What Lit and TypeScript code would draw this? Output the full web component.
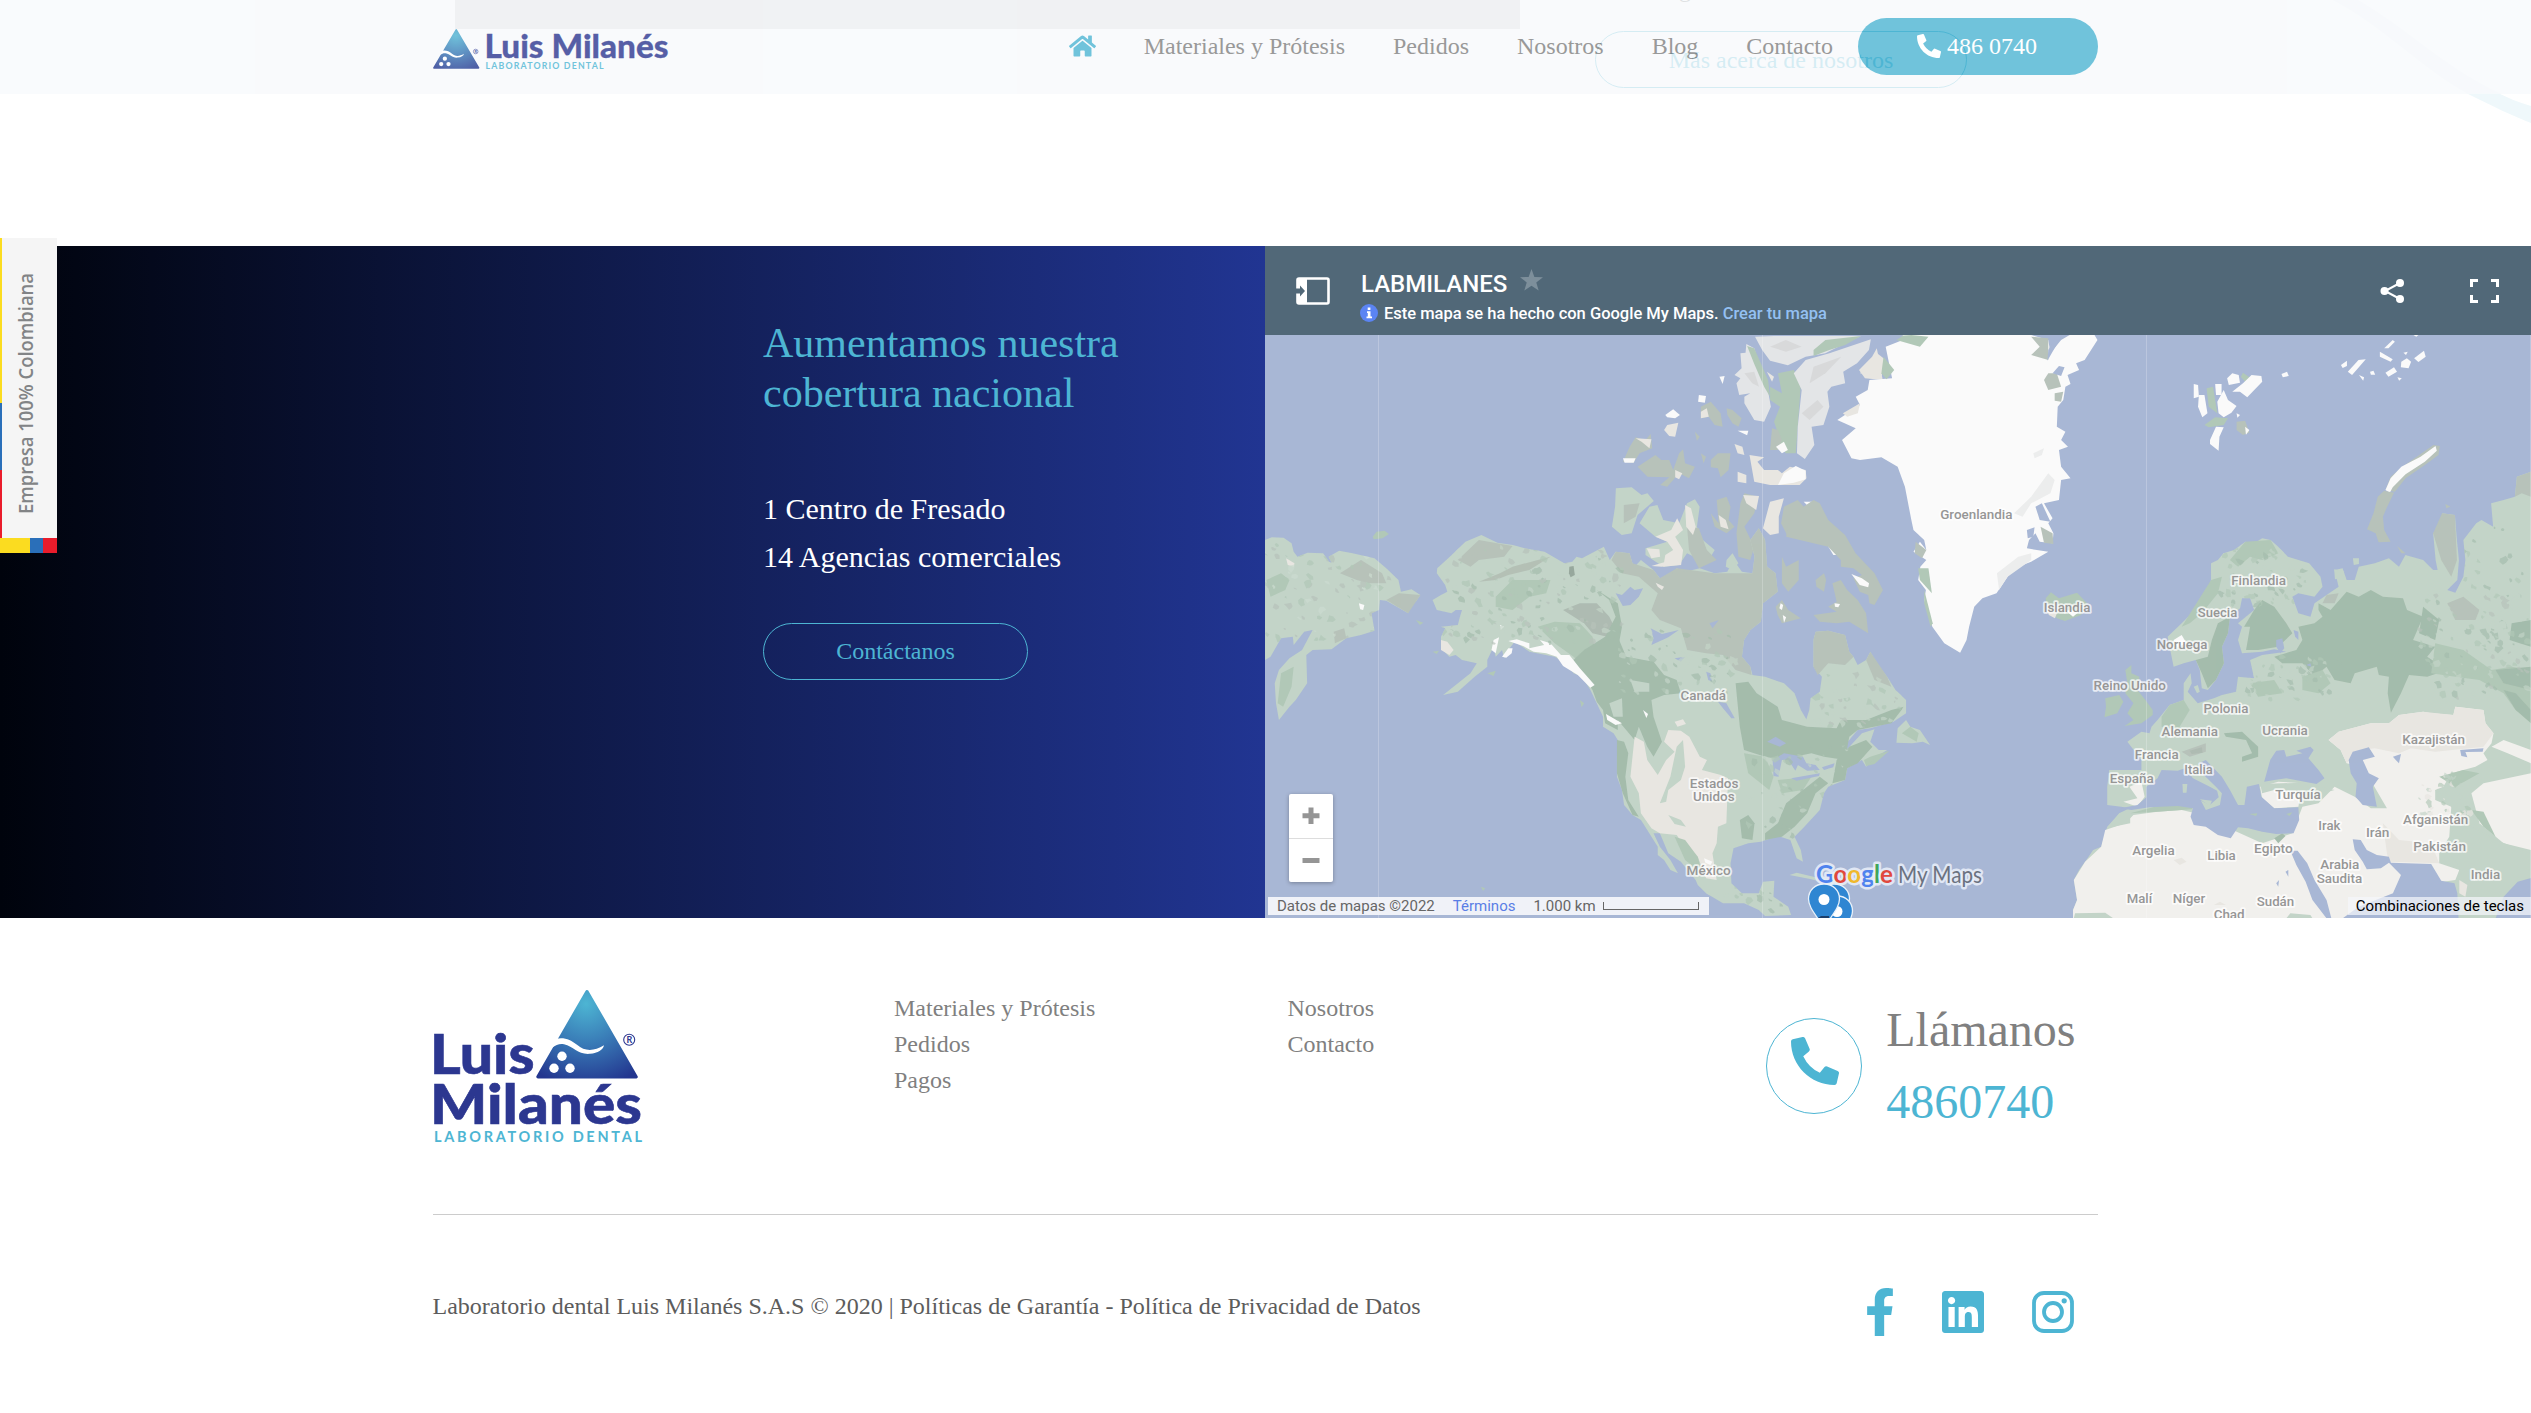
import { LitElement, html, svg, css } from "lit";
import { customElement } from "lit/decorators.js";

const PHONE =
  "M497.39 361.8l-112-48a24 24 0 0 0-28 6.9l-49.6 60.6A370.66 370.66 0 0 1 130.6 204.11l60.6-49.6a23.94 23.94 0 0 0 6.9-28l-48-112A24.16 24.16 0 0 0 122.6.61l-104 24A24 24 0 0 0 0 48c0 256.5 207.9 464 464 464a24 24 0 0 0 23.4-18.6l24-104a24.29 24.29 0 0 0-14.01-27.6z";
const HOME =
  "M280.37 148.26L96 300.11V464a16 16 0 0 0 16 16l112.06-.29a16 16 0 0 0 15.92-16V368a16 16 0 0 1 16-16h64a16 16 0 0 1 16 16v95.64a16 16 0 0 0 16 16.05L464 480a16 16 0 0 0 16-16V300L295.67 148.26a12.19 12.19 0 0 0-15.3 0zM571.6 251.47L488 182.56V44.05a12 12 0 0 0-12-12h-56a12 12 0 0 0-12 12v72.61L318.47 43a48 48 0 0 0-61 0L4.34 251.47a12 12 0 0 0-1.6 16.9l25.5 31A12 12 0 0 0 45.15 301l235.22-193.74a12.19 12.19 0 0 1 15.3 0L530.9 301a12 12 0 0 0 16.9-1.6l25.5-31a12 12 0 0 0-1.7-16.93z";
const FACEBOOK =
  "M279.14 288l14.22-92.66h-88.91v-60.13c0-25.35 12.42-50.06 52.24-50.06h40.42V6.26S260.43 0 225.36 0c-73.22 0-121.08 44.38-121.08 124.72v70.62H22.89V288h81.39v224h100.17V288z";
const LINKEDIN =
  "M416 32H31.9C14.3 32 0 46.5 0 64.3v383.4C0 465.5 14.3 480 31.9 480H416c17.6 0 32-14.5 32-32.3V64.3c0-17.8-14.4-32.3-32-32.3zM135.4 416H69V202.2h66.5V416zm-33.2-243c-21.3 0-38.5-17.3-38.5-38.5S80.9 96 102.2 96c21.2 0 38.5 17.3 38.5 38.5 0 21.3-17.2 38.5-38.5 38.5zm282.1 243h-66.4V312c0-24.8-.5-56.7-34.5-56.7-34.6 0-39.9 27-39.9 54.9V416h-66.4V202.2h63.7v29.2h.9c8.9-16.8 30.6-34.5 62.9-34.5 67.2 0 79.7 44.3 79.7 101.9V416z";

/* ---------- shared brand mark, 102 x 89 ---------- */
const mark = (id: string) => svg`
  <defs>
    <radialGradient id=${id} gradientUnits="userSpaceOnUse" cx="50" cy="14" r="84">
      <stop offset="0" stop-color="#4db5d3"></stop>
      <stop offset=".5" stop-color="#3878b5"></stop>
      <stop offset="1" stop-color="#23368f"></stop>
    </radialGradient>
  </defs>
  <path d="M51 2 L100 87 H2 Z" fill="url(#${id})" stroke="url(#${id})" stroke-width="3.5" stroke-linejoin="round"></path>
  <path d="M20 49 C28 47 35 50 41 55 C49 62 58 61.500 68 55.500 C67 60 62 63.500 54 64 C42 65 38 57 28 54.500 C24 53.500 20 55 16 58 Z" fill="#fff"></path>
  <circle cx="26" cy="66.500" r="4.700" fill="#fff"></circle>
  <circle cx="18" cy="78.500" r="4.700" fill="#fff"></circle>
  <circle cx="34" cy="78.500" r="4.700" fill="#fff"></circle>`;

/* ---------- map data ---------- */
type Shape = [string, string];
const SEA = "#a8b7d5", LAND = "#c3d4c8", WOOD = "#a4bcac", MID = "#b1c8b7", TUNDRA = "#b7c2ba",
  DRY = "#e8e6e1", SAND = "#f1f0ed", ICE = "#fafafa", PALE = "#e3e5e7", ROCK = "#aebbb2";

const SIBERIA = "12,-60 28,-68 56,-67 75,-50 80,-25 89,-10 113,-22 150,-20 164,5 170,8 163,-10 188,-28 220,-20 272,-5 300,25 329,60 335,95 360,88 381,105 370,125 352,130 352,160 325,140 300,122 285,120 283,150 265,160 272,212 240,225 205,235 170,268 125,270 110,285 112,370 85,420 70,440 45,480 38,430 35,370 45,330 70,295 100,270 125,210 105,215 80,255 78,230 50,235 25,290 12,300";
const AMERICA = "421,25 451,-10 488,-55 526,-75 564,-52 601,-45 629,-35 676,-25 723,10 742,5 752,-10 765,-5 817,-40 831,0 845,-25 878,-20 885,10 890,20 905,0 935,30 950,55 975,45 990,25 1010,35 1045,25 1080,40 1110,35 1125,0 1145,35 1170,40 1175,-10 1165,-60 1185,-95 1200,-60 1205,20 1225,40 1230,95 1195,130 1190,185 1165,210 1150,240 1145,290 1165,320 1170,345 1200,350 1245,370 1270,400 1285,450 1298,478 1305,450 1308,415 1330,395 1335,350 1315,320 1315,240 1320,215 1350,212 1390,225 1400,275 1410,290 1420,315 1440,300 1450,275 1465,310 1490,350 1510,390 1535,420 1535,460 1505,485 1450,505 1420,510 1400,540 1380,570 1395,568 1430,520 1460,508 1450,545 1470,570 1490,570 1465,590 1440,620 1430,600 1395,625 1390,660 1350,680 1340,700 1330,750 1290,805 1270,830 1285,870 1290,905 1275,895 1260,840 1230,828 1190,845 1160,850 1125,865 1118,910 1120,970 1145,1000 1185,1000 1195,965 1222,962 1220,1010 1255,1040 1262,1065 1200,1068 1185,1050 1150,1030 1100,1030 1060,1000 1040,975 1035,960 1000,905 970,880 950,820 935,820 950,860 975,900 993,940 975,930 960,900 945,885 945,860 920,810 905,780 885,765 865,735 860,690 848,650 848,590 850,540 840,520 815,500 815,470 800,430 785,390 765,350 745,340 725,310 700,290 640,275 605,245 590,270 580,295 575,270 560,290 555,260 540,300 540,320 510,350 470,395 435,405 500,340 515,310 480,300 465,285 450,290 430,265 430,230 440,205 430,200 470,195 475,170 480,150 465,150 455,160 420,150 410,120 430,105 445,95 440,75 420,40";
const EURASIA = "773,10 790,0 804,-20 830,-30 858,-55 880,-50 900,-65 921,-60 940,-40 964,-10 1017,10 1045,50 1050,80 1030,110 990,100 975,110 990,160 1020,170 1030,130 1060,105 1090,80 1080,30 1100,25 1110,60 1130,60 1140,20 1180,10 1215,-5 1240,20 1256,-15 1300,0 1325,30 1336,30 1331,0 1325,-80 1347,-105 1347,-140 1379,-135 1384,-60 1389,0 1385,60 1360,90 1380,98 1400,50 1405,0 1400,-60 1432,-110 1445,-120 1474,-100 1469,-170 1500,-180 1528,-190 1533,-250 1568,-265 1580,1075 430,1075 430,1050 440,1020 432,960 445,930 460,905 480,870 500,860 515,800 545,760 570,745 550,740 515,735 515,680 520,630 600,630 600,600 565,545 600,515 620,520 625,500 640,480 670,435 705,420 705,370 722,340 725,370 715,395 740,430 780,415 800,405 835,395 840,350 880,355 870,300 900,285 960,275 930,268 900,275 850,280 840,240 850,200 840,190 880,150 870,115 850,115 845,145 820,170 815,220 800,260 805,310 785,360 765,390 750,385 745,330 735,300 705,310 680,320 670,260 665,230 700,190 750,130 773,60";

const NORTH_AMERICA: Shape[] = [
  [AMERICA, LAND],
  ["470,0 520,-60 600,-42 580,-10 520,0 500,20", TUNDRA],
  ["520,65 570,40 600,20 660,0 690,-10 640,30 590,45 560,60", "#b4c0b6"],
  ["845,-25 878,-20 885,10 935,30 950,55 990,25 1080,40 1170,40 1175,-10 1165,-60 1185,-95 1200,-60 1205,20 1225,40 1230,95 1195,130 1190,185 1165,210 1150,240 1145,290 1165,320 1168,345 1130,330 1100,285 1060,280 1015,270 1000,205 950,180 930,150 945,100 900,50 860,40 835,0", TUNDRA],
  ["1315,240 1320,215 1350,212 1390,225 1400,275 1410,290 1390,315 1350,310 1325,345 1315,320", TUNDRA],
  ["1440,300 1450,275 1490,350 1500,380 1460,360", TUNDRA],
  ["720,150 760,130 800,130 830,170 845,210 840,235 790,220 770,190", ROCK],
  ["560,110 600,60 690,60 680,100 640,110 600,150 560,140", MID],
  ["660,200 700,185 760,190 790,230 800,300 770,320 745,290 700,250", MID],
  ["845,170 830,120 800,90 850,130 860,200 850,270 780,280 770,270 820,230", WOOD],
  ["770,270 850,230 870,290 935,305 960,345 990,360 1000,400 960,405 930,420 935,470 955,545 935,590 920,560 900,500 890,540 870,510 850,480 850,510 820,490 815,450 800,425 790,390 765,340 745,300", WOOD],
  ["880,360 925,370 925,395 890,395", LAND],
  ["1130,370 1160,365 1180,400 1230,440 1240,480 1300,500 1370,505 1380,480 1440,480 1500,450 1530,440 1500,490 1420,510 1400,530 1390,600 1340,590 1310,580 1270,590 1240,600 1200,590 1150,570 1140,500", WOOD],
  ["1400,560 1440,540 1455,560 1420,610 1395,625 1390,660 1360,670 1370,600", WOOD],
  ["1150,580 1200,590 1220,650 1210,690 1160,640", MID],
  ["1140,780 1160,765 1175,790 1170,840 1145,835", WOOD],
  ["1200,820 1230,790 1250,730 1300,680 1330,650 1350,670 1320,700 1300,760 1270,800 1240,830 1200,840", WOOD],
  ["1230,660 1310,650 1290,690 1240,700", MID],
  ["848,540 865,545 875,580 868,650 875,720 900,770 885,765 862,700 848,640", WOOD],
  ["830,430 860,415 862,470 840,470", LAND],
  ["890,530 912,545 920,600 945,645 965,600 985,575 960,545 970,510 1000,512 1020,530 1045,590 1062,600 1050,630 1095,645 1112,655 1108,790 1088,800 1085,850 1075,880 1085,960 1060,955 1040,890 1015,872 990,825 950,820 930,805 905,760 900,700 880,650 885,590", DRY],
  ["985,485 1005,478 1012,492 992,500", DRY],
  ["990,560 1005,540 1010,620 1000,660 970,690 965,725 950,730 975,650", LAND],
  ["970,765 1000,780 1012,800 985,792", LAND],
  ["985,830 1010,840 1040,890 1050,940 1010,900", MID],
  ["555,240 568,232 560,280 550,270", ICE], ["575,290 590,265 600,265 598,280 585,293", ICE],
  ["590,243 610,238 640,250 640,265 675,255 665,240 690,250 715,285 735,285 760,325 795,375 785,383 755,345 720,318 705,290 680,280 650,275 625,258", ICE],
  ["822,462 860,490 845,495 825,480", ICE], ["910,450 922,462 918,474", ICE], ["570,195 580,200 572,210", ICE],
  ["930,18 1000,-8 985,12 955,20", DRY], ["940,68 960,80 955,90 945,80", DRY],
  ["1055,895 1075,905 1070,915 1058,908", ICE],
  ["430,270 430,240 445,245 460,270 450,285", DRY],
  ["735,20 745,18 748,45 738,52 734,40", "#98a89d"],
  ["845,100 860,105 880,80 890,90 910,85 900,110 880,135 862,138", SEA],
  ["928,205 955,222 995,210 970,232 930,255 935,235", SEA],
  ["985,295 1010,290 1000,305", SEA], ["1060,335 1070,340 1075,365 1065,360", SEA],
  ["1088,425 1108,430 1128,475 1120,475 1100,445", SEA],
  ["1068,190 1090,180 1075,205", SEA],
  ["1205,545 1225,530 1250,550 1235,560", SEA],
  ["1218,600 1245,580 1290,590 1298,610 1320,615 1330,630 1300,632 1278,615 1272,632 1255,600 1240,600 1232,650 1220,648", SEA],
  ["1262,655 1330,640 1328,648 1275,662", SEA], ["1335,622 1365,610 1362,622 1340,630", SEA],
  ["1515,505 1535,480 1545,500 1568,510 1592,555 1575,545 1550,550 1512,548", LAND],
  ["1525,520 1545,500 1565,520 1560,545", MID],
  ["1258,945 1275,938 1320,952 1365,960 1395,975 1350,972 1310,958", LAND],
  ["1435,600 1450,590 1495,572 1460,612 1440,618", MID],
  ["1320,60 1340,40 1345,60 1340,95 1322,80", TUNDRA],
  ["1225,140 1240,120 1255,150 1285,175 1240,190 1230,165", TUNDRA],
  ["1380,0 1350,-40 1250,-70 1255,-110 1280,-150 1315,-180 1330,-170 1350,-120 1390,-75 1415,-20 1460,40 1480,90 1460,135 1448,130 1445,105 1425,95 1410,55 1430,45 1410,25 1380,20", TUNDRA],
  ["1360,70 1380,60 1395,90 1420,120 1440,160 1445,220 1400,185 1370,190 1330,185 1315,165 1370,155 1350,140 1370,125", TUNDRA],
  ["1240,-10 1250,20 1280,0 1280,60 1255,95 1240,70", TUNDRA],
  ["1405,42 1430,55 1447,70 1445,82 1425,75", ICE], ["1237,130 1243,135 1240,150 1234,145", ICE],
  ["1242,165 1250,172 1245,188", ICE], ["1365,130 1378,132 1374,142 1366,140", ICE],
  ["525,980 535,985 530,993", MID], ["370,180 388,188 380,195", MID], ["410,275 425,272 420,282", MID],
  ["540,340 560,332 555,348", MID], ["760,420 770,430 764,442", MID],
];

const RUSSIA_EAST: Shape[] = [
  [SIBERIA, LAND],
  ["190,40 240,0 290,40 300,70 260,70 230,60", TUNDRA], ["330,100 381,105 352,160 300,120", TUNDRA],
  ["15,60 50,40 70,60 60,90 25,110", MID], ["175,215 200,205 205,235 178,250", TUNDRA],
  ["50,340 80,320 75,380 55,440 42,430", MID], ["235,130 248,135 245,150 238,148", ICE],
  ["62,-5 82,10 80,20 66,15", DRY],
];

const ARCTIC: Shape[] = [
  ["285,890 295,875 315,872 326,882 310,895 288,898", MID],
  ["900,745 940,742 965,765 980,760 996,783 955,825 940,880 915,885 890,860 898,800", LAND],
  ["920,795 960,790 950,830 920,850", TUNDRA],
  ["960,850 985,800 1005,795 1020,840 1060,850 1080,790 1100,778 1112,800 1105,860 1120,900 1150,930 1130,970 1080,940 1060,975 1020,980 975,945 975,925 1030,905 1000,890", LAND],
  ["1080,860 1110,865 1130,930 1155,960 1110,985 1085,930", TUNDRA],
  ["1075,795 1090,805 1102,860 1095,885 1078,860", DRY], ["1000,890 1040,870 1055,835 1070,870 1050,890 1070,930 1065,975 1020,980 1025,945 1045,930 1030,905", DRY],
  ["978,925 1010,928 1012,950 990,955", DRY],
  ["1140,820 1160,850 1155,780 1180,770 1190,800 1185,840 1200,860 1180,880 1150,860", TUNDRA], ["1160,825 1178,840 1185,868 1165,860", DRY],
  ["1205,880 1215,790 1225,760 1260,770 1250,820 1225,860 1250,920 1240,960 1210,950", TUNDRA], ["1222,765 1262,768 1255,810 1230,790", DRY],
  ["1290,785 1325,775 1312,830 1312,880 1290,885 1272,865", DRY],
  ["1325,800 1360,780 1375,800 1370,850 1335,890 1318,850", TUNDRA], ["1340,850 1365,858 1372,878 1350,880", DRY],
  ["1375,785 1400,785 1415,810 1400,815", ICE], ["1408,835 1428,850 1420,862 1405,855", ICE], ["1435,915 1450,910 1465,945 1450,945", ICE], ["1455,895 1470,905 1462,912", ICE],
  ["1180,960 1195,940 1210,970 1195,990 1178,980", LAND], ["1250,900 1262,905 1258,930", TUNDRA],
  ["1025,525 1045,508 1062,525 1050,535 1030,532", ICE], ["1030,555 1058,548 1050,590 1035,588 1022,570", DRY],
  ["1110,465 1128,468 1125,488 1108,485", ICE], ["1115,500 1140,485 1165,520 1170,560 1150,555 1135,530 1115,535", TUNDRA], ["1162,410 1175,408 1170,432", ICE],
  ["1115,515 1130,505 1135,530 1115,535", DRY],
  ["1180,505 1195,510 1218,535 1210,560 1195,550 1182,525", TUNDRA], ["1208,572 1235,572 1232,586", ICE],
  ["918,665 935,620 950,592 975,600 988,582 992,625 960,640 945,668", TUNDRA], ["950,595 990,598 985,625 965,605", DRY], ["918,655 950,655 945,668 922,668", ICE],
  ["955,680 1000,645 1015,660 1035,660 1045,690 1060,640 1070,628 1075,670 1100,680 1085,715 1060,700 1030,740 1012,735 1035,712 980,710", TUNDRA],
  ["1050,690 1068,700 1060,718 1050,712", DRY],
  ["1140,660 1158,640 1190,640 1185,690 1165,712 1158,685 1140,682", TUNDRA], ["1115,640 1128,650 1122,670", TUNDRA], ["1100,575 1112,590 1105,602", TUNDRA],
  ["1200,612 1220,620 1225,645 1208,640", DRY], ["1208,695 1230,705 1230,730 1208,725", DRY],
  ["1238,645 1275,652 1258,665 1275,690 1310,690 1320,700 1340,680 1380,690 1382,715 1365,735 1290,735 1250,725", DRY],
  ["1310,735 1325,700 1355,678 1380,692 1380,718 1350,728", ICE],
  ["1252,290 1300,288 1520,288 1480,310 1430,340 1380,350 1335,376 1290,362 1270,330", PALE],
  ["1400,330 1430,300 1520,288 1480,315 1440,330 1400,348", MID],
  ["1230,312 1250,325 1262,375 1280,420 1292,500 1275,545 1250,540 1225,490 1225,470 1240,460 1212,465 1205,430 1215,415 1200,405 1218,385 1215,340 1228,338", PALE],
  ["1232,318 1250,325 1285,420 1290,470 1275,440 1250,372", MID],
  ["1310,400 1350,390 1368,430 1365,480 1355,640 1330,640 1300,600 1310,580 1300,545 1315,500 1290,480 1290,440 1320,460", MID],
  ["1295,565 1310,570 1320,600 1310,630 1290,630", TUNDRA], ["1282,395 1300,410 1295,425", DRY],
  ["1350,400 1380,360 1440,340 1545,298 1540,330 1510,370 1475,395 1480,430 1445,440 1435,455 1440,500 1425,555 1395,560 1402,615 1378,657 1358,640 1360,560 1370,450", PALE],
  ["1400,380 1470,350 1430,400 1390,430", "#d8d9da"], ["1370,520 1410,480 1425,500 1390,540", "#d8d9da"],
  ["1290,320 1330,300 1370,320 1330,335", "#d8d9da"], ["1225,400 1250,395 1262,440 1245,430", "#d8d9da"],
  ["1305,620 1325,605 1335,630 1320,640", ICE],
  ["1560,325 1548,350 1515,390 1530,415 1575,420", DRY],
];

const GREENLAND: Shape[] = [
  ["22,420 75,415 60,320 100,300 100,285 400,285 440,300 445,340 470,300 490,285 548,285 555,300 525,360 505,370 512,390 485,405 492,432 480,440 475,480 462,500 460,560 480,575 470,600 486,620 465,630 470,680 492,715 470,720 465,780 430,790 450,835 440,850 452,880 450,910 420,905 410,880 395,900 390,925 440,935 400,965 360,985 345,1010 319,1060 286,1075 267,1100 255,1160 249,1200 234,1238 197,1210 169,1160 150,1080 154,1050 136,1020 141,980 155,960 125,935 140,905 155,930 150,900 125,870 120,840 105,740 88,680 50,652 0,660 -20,655 -42,600 -10,565 -53,540 0,495 -10,470 18,450", ICE],
  ["60,290 100,287 85,300 140,320 160,290 120,285", MID],
  ["0,400 40,340 60,360 50,410", DRY], ["55,350 80,390 62,418 50,400", MID], ["-40,520 0,490 -5,520 -30,530", DRY],
  ["400,290 440,295 440,360 400,345 420,320", TUNDRA], ["440,400 460,400 470,440 440,450 430,420", TUNDRA], ["455,460 475,455 470,485 455,482", TUNDRA],
  ["130,905 155,930 145,955 128,940", TUNDRA], ["136,985 160,985 168,1060 140,1020", MID], ["150,1050 170,1150 165,1160 150,1090", MID],
  ["405,640 430,625 425,645 408,655", "#eceded"], ["440,700 455,720 445,760 400,790 380,830 360,820 400,770", "#eceded"],
  ["320,1000 370,950 400,940 400,960 345,1010 325,1050", "#eceded"], ["422,860 450,880 452,912 430,908", TUNDRA],
  ["410,800 425,790 445,845 420,840", SEA], ["450,400 465,378 478,382 470,408", SEA], ["390,870 408,862 405,890 392,895", SEA], ["438,362 470,290 458,290 440,330", SEA],
];

const NORTH_SEA_ISLES: Shape[] = [
  ["780,432 790,435 792,470 780,475", ICE], ["792,465 805,465 812,520 800,532 790,500", ICE],
  ["810,445 825,440 835,520 815,500", MID], ["830,432 845,432 845,465 832,465", ICE],
  ["850,450 860,480 880,498 868,518 850,532 838,520 835,485", ICE], ["870,400 885,405 888,428 862,435 858,415", ICE],
  ["895,398 910,412 900,425 890,410", MID], ["870,455 895,430 915,405 938,408 940,425 905,472 888,455", ICE],
  ["805,555 830,532 860,535 850,555 815,562", MID], ["818,600 832,560 850,562 840,590 838,632 818,612", ICE],
  ["880,545 900,542 910,578 895,585 880,570", TUNDRA], ["900,560 910,570 902,584", ICE], ["880,520 888,525 882,533", ICE],
  ["985,402 998,395 1002,408 988,412", ICE],
  ["1124,375 1138,362 1138,378 1128,384", ICE], ["1140,395 1165,360 1182,358 1150,405", ICE], ["1166,405 1178,412 1176,422", ICE],
  ["1215,335 1245,358 1240,365 1215,350", ICE], ["1225,325 1245,300 1250,305 1235,325", ICE],
  ["1265,365 1278,355 1288,365 1282,385 1264,382", ICE], ["1295,355 1318,332 1322,350 1305,366", ICE],
  ["1228,398 1248,382 1255,395 1235,410", ICE], ["1192,395 1200,392 1204,404 1194,404", ICE], ["1270,338 1280,335 1276,345", ICE], ["1292,284 1306,284 1300,290", ICE], ["1256,412 1266,415 1260,422", ICE],
  ["1340,615 1355,618 1352,645 1320,675 1275,715 1250,755 1228,750 1240,710 1270,678", TUNDRA],
  ["1345,618 1348,632 1320,665 1275,703 1245,742 1238,758 1228,750 1240,715 1265,680 1310,650", ICE],
  ["1225,752 1248,758 1232,800 1222,830 1225,870 1240,905 1212,907 1205,880 1185,868 1200,820 1210,770", TUNDRA],
  ["1152,955 1166,955 1166,972 1154,975", LAND], ["1255,918 1275,940 1265,940", TUNDRA],
  ["1368,792 1380,800 1370,805", TUNDRA], ["1108,988 1132,995 1122,1015 1110,1018", LAND],
];

const OLD_WORLD: Shape[] = [
  [EURASIA, LAND],
  ["820,0 858,-55 921,-60 940,-20 900,0 870,-10 840,20", MID],
  ["773,60 800,50 790,100 750,160 720,190 700,200", MID],
  ["1040,130 1070,150 1110,95 1140,110 1170,90 1200,110 1250,115 1260,150 1300,170 1275,240 1330,260 1310,290 1360,330 1310,350 1265,345 1245,400 1220,458 1212,400 1215,350 1190,345 1185,320 1130,340 1120,370 1080,360 1060,320 1030,350 1000,310 950,310 930,290 985,270 1000,240 990,200 1030,190 1050,170 1040,150", WOOD],
  ["880,150 900,120 930,140 960,190 975,220 940,260 890,270 860,270 870,200 855,200", WOOD],
  ["735,300 765,290 775,240 790,190 820,170 815,220 800,260 805,310 785,360 765,385 750,340", WOOD],
  ["1000,350 1050,330 1070,370 1040,400 1000,390", MID], ["870,370 930,360 950,400 890,410", MID],
  ["1330,250 1400,270 1470,330 1520,320 1568,330 1568,480 1530,450 1500,400 1440,360 1380,350 1320,340", MID],
  ["1480,330 1568,320 1568,390 1500,370", WOOD], ["1500,390 1530,400 1568,450 1568,490 1530,450", WOOD],
  ["1300,140 1340,180 1330,240 1290,220", WOOD], ["1520,190 1568,180 1568,260 1540,250 1515,240", WOOD],
  ["1360,130 1400,110 1440,150 1430,180 1380,180", TUNDRA], ["1325,-80 1347,-140 1379,-135 1384,0 1370,50 1345,0", TUNDRA],
  ["1528,-190 1533,-250 1568,-265 1568,-190 1545,-200", TUNDRA], ["1060,105 1090,100 1080,130 1050,130", TUNDRA],
  ["650,470 670,435 705,420 720,450 690,510 650,500", MID],
  ["700,575 760,550 760,575 720,590", TUNDRA], ["720,572 750,562 752,578 725,582", ROCK],
  ["805,520 850,515 890,560 890,590 850,605 850,590 875,580 860,540 810,530", WOOD],
  ["1090,515 1170,490 1215,490 1240,465 1300,455 1320,460 1375,465 1380,440 1450,450 1455,490 1475,520 1470,550 1450,580 1460,600 1430,620 1370,640 1350,680 1330,690 1330,720 1370,740 1365,830 1340,880 1340,910 1390,930 1380,960 1350,965 1200,1075 430,1075 430,1050 440,1020 432,960 460,905 500,860 510,810 560,790 580,765 640,755 700,750 735,760 900,850 975,820 1000,740 1040,730 1080,680 1130,710 1170,745 1210,745 1150,620 1110,610 1095,570 1065,540", SAND],
  ["1090,515 1170,490 1215,490 1240,465 1300,455 1375,465 1380,440 1450,450 1455,490 1475,520 1450,560 1330,575 1270,565 1240,580 1180,565 1140,570 1110,610 1095,570 1065,540", DRY],
  ["1420,700 1450,670 1568,640 1580,860 1568,870 1500,850 1470,820 1440,790", SAND],
  ["1470,560 1500,540 1568,570 1568,610 1510,580", SAND],
  ["895,680 940,665 1000,670 990,740 930,745 900,715", SAND], ["895,672 1000,668 1080,690 1050,700 930,690 900,700", LAND],
  ["1375,800 1420,800 1480,840 1568,880 1580,950 1530,970 1500,1010 1480,1075 1395,1075 1385,990 1390,920 1360,870", LAND],
  ["1330,690 1390,690 1420,740 1440,790 1400,800 1370,740", LAND],
  ["1390,960 1410,975 1405,1010 1390,1000", DRY],
  ["1340,650 1400,630 1440,640 1380,680", MID], ["1420,750 1450,755 1480,830 1450,800", MID],
  ["1200,790 1240,840 1320,850 1340,910 1215,905 1210,880", DRY],
  ["545,760 572,750 572,790 530,800 520,800", LAND], ["572,760 640,738 730,735 725,748 640,755", MID],
  ["570,680 600,665 608,710 590,740 555,725 590,715", SAND],
  ["435,1060 510,1058 530,1075 432,1075", LAND], ["970,1060 1020,1065 1025,1075 960,1075", LAND],
  ["930,835 950,820 958,828 940,850", WOOD], ["680,900 700,893 712,905 695,915", DRY], ["780,1035 795,1025 810,1035", DRY],
  ["547,745 590,735 612,712 612,680 640,655 650,630 690,632 708,625 728,655 770,680 788,692 792,712 770,735 748,722 760,750 795,735 800,700 785,680 755,645 742,610 760,600 800,650 820,690 840,735 856,735 860,700 862,680 892,672 898,710 930,745 990,742 992,780 978,820 935,822 900,815 865,805 840,802 822,835 790,825 760,800 730,795 722,770 728,745 690,738 620,742 575,750", SEA],
  ["745,718 775,722 770,738", LAND], ["702,672 714,672 712,698 703,698", LAND], ["868,762 888,760 885,768", MID], ["960,762 975,757 968,768", MID],
  ["905,665 920,600 935,572 955,570 960,590 1000,580 985,572 1020,560 1028,570 1015,595 1040,630 1055,655 1035,672 960,655 930,660", SEA],
  ["1115,600 1125,575 1165,562 1180,590 1150,600 1165,640 1190,655 1175,680 1185,740 1150,735 1132,710 1135,670 1120,640", SEA],
  ["1392,570 1450,565 1448,575 1405,576 1410,592 1395,588", SEA], ["1225,590 1245,582 1240,610 1232,600", SEA],
  ["970,872 988,872 1012,910 1030,960 1060,1020 1072,1075 1060,1075 1025,1020 1008,965 985,915", SEA],
  ["1125,838 1145,840 1160,870 1185,885 1215,890 1220,908 1320,912 1345,962 1378,970 1385,1000 1388,1075 1100,1075 1140,1040 1225,1000 1245,945 1215,908 1195,925 1160,928 1150,905 1130,870", SEA],
  ["1580,950 1535,965 1500,1010 1480,1075 1580,1075", SEA],
  ["935,240 950,235 955,265 945,280 935,260", SEA], ["978,210 990,215 990,240 982,230", SEA], ["1010,315 1020,310 1022,320", SEA],
  ["958,935 965,930 965,950", SEA], ["935,970 942,960 940,980", SEA], ["730,380 740,375 745,395 738,400", LAND],
  ["680,240 700,225 712,250 690,262", ICE],
  ["560,330 575,315 575,340 595,350 590,390 610,420 628,450 628,465 600,490 558,498 580,480 565,460 580,430 560,400 565,370", MID],
  ["510,415 545,405 555,425 540,460 508,472 512,440", MID],
  ["362,115 375,97 395,115 440,98 465,130 450,165 410,183 390,175 365,150", MID], ["410,150 445,155 430,170", ICE], ["365,150 390,160 385,175 370,165", DRY],
];

type Label = [string, number, number, number];
const place = (ox: number, oy: number, sx: number, list: Label[]): Label[] =>
  list.map(([t, x, y, w]) => [t, ox + x * sx, oy + y / 3, w * sx]);
const LABELS: Label[] = [
  ...place(1900, 560, 0.4024, [
    ["Finlandia", 891, 76, 136], ["Suecia", 789, 171, 98], ["Noruega", 701, 268, 126], ["Islandia", 415, 155, 116],
    ["Reino Unido", 571, 389, 180], ["Polonia", 810, 459, 112], ["Alemania", 720, 529, 140], ["Ucrania", 957, 525, 113],
    ["Kazajistán", 1326, 552, 156], ["Francia", 638, 596, 109], ["Italia", 742, 643, 71], ["España", 576, 669, 110],
    ["Turquía", 989, 717, 113], ["Afganistán", 1331, 791, 162], ["Irak", 1067, 811, 55], ["Irán", 1187, 831, 58],
    ["Pakistán", 1341, 872, 131], ["Argelia", 630, 884, 105], ["Libia", 799, 899, 71], ["Egipto", 928, 879, 96],
    ["Arabia", 1093, 928, 97], ["Saudita", 1092, 968, 113], ["India", 1455, 958, 73], ["Malí", 595, 1028, 63],
    ["Níger", 718, 1028, 81], ["Sudán", 933, 1038, 93], ["Chad", 818, 1078, 77],
  ]),
  ...place(1860, 240, 0.4279, [["Groenlandia", 272, 838, 169]]),
  ...place(1260, 560, 0.4209, [
    ["Canadá", 1053, 420, 108], ["Estados", 1079, 683, 116], ["Unidos", 1078, 724, 99], ["México", 1066, 945, 105],
  ]),
];

/* Small relief patches, seeded so that every render is identical. */
const relief = (seed: number, n: number, x0: number, y0: number, x1: number, y1: number, tones: string[]) => {
  let s = seed;
  const rnd = () => ((s = (s * 16807) % 2147483647) / 2147483647);
  return Array.from({ length: n }, () => {
    const x = x0 + rnd() * (x1 - x0), y = y0 + rnd() * (y1 - y0), r = 3 + rnd() * 9, lean = rnd() * 3;
    const pts = Array.from({ length: 7 }, (_, i) => {
      const a = (i / 7) * Math.PI * 2, k = r * (0.35 + rnd() * 0.8);
      return `${(x + Math.cos(a) * k + Math.sin(a) * lean).toFixed(1)},${(y + Math.sin(a) * k * 1.2).toFixed(1)}`;
    }).join(" ");
    return svg`<polygon points=${pts} fill=${tones[Math.floor(rnd() * tones.length)]}></polygon>`;
  });
};
const shapes = (list: Shape[]) => list.map(([p, c]) => svg`<polygon points=${p} fill=${c}></polygon>`);
const pin = (x: number, y: number) => svg`
  <path transform="translate(${x} ${y})" d="M0 0 C9 0 15.500 6.500 15.500 15 C15.500 24 7 32 0 44 C-7 32 -15.500 24 -15.500 15 C-15.500 6.500 -9 0 0 0Z"
    fill="#2f86d2" stroke="#e8f1fa" stroke-width="1.300"></path>
  <circle cx=${x} cy=${y + 15.5} r="5.500" fill="#fff"></circle>`;

@customElement("lab-map")
class LabMap extends LitElement {
  static styles = css`
    :host { display: flex; flex-direction: column; position: relative; height: 672px; font-family: Roboto, sans-serif; overflow: hidden; }
    .bar { height: 89px; background: #516878; display: flex; box-sizing: border-box; padding: 0 32px 0 31px; align-items: flex-start; color: #fff; }
    .panel { margin-top: 31px; width: 34px; height: 28px; }
    .info { margin-left: 30px; margin-top: 23px; flex: 1; }
    .titlerow { display: flex; align-items: flex-start; gap: 13px; height: 35px; padding-left: 1px; }
    .title { font-size: 24px; font-weight: 500; line-height: 31px; letter-spacing: 0; }
    .sub { display: flex; height: 18px; overflow: hidden; font-size: 16.5px; line-height: 20px; font-weight: 500; }
    .sub svg { width: 18px; height: 18px; margin: 0 6px 0 0; flex: none; }
    .sub span { white-space: pre; }
    .sub .link { color: #94c0f2; margin-left: 4px; }
    .share { width: 25px; height: 24px; margin: 33px 65px 0 0; }
    .full { width: 29px; height: 24px; margin-top: 33px; }
    .canvas { display: block; width: 100%; height: 583px; flex: none; background: #a8b7d5; }
    .place { font: 500 13px Roboto, sans-serif; fill: #969696; stroke: rgba(255,255,255,.72); stroke-width: 3.6px; paint-order: stroke; stroke-linejoin: round; }
    .brand { font-family: Lato, sans-serif; font-size: 24px; stroke: rgba(235,240,250,.85); stroke-width: 5px; paint-order: stroke; stroke-linejoin: round; }
    .zoom { position: absolute; left: 24px; bottom: 36px; width: 44px; height: 88px; background: #fff; border-radius: 2px; box-shadow: 0 1px 4px rgba(0,0,0,.3); }
    .legal { position: absolute; left: 3px; bottom: 3px; height: 18px; width: 441px; box-sizing: border-box; padding-left: 9px; background: rgba(245,246,251,.93); display: flex; align-items: center; font-size: 15px; color: #666; white-space: nowrap; }
    .legal .terms { color: #5a7ee6; margin-left: 18px; }
    .legal .km { margin-left: 18px; }
    .legal .scale { width: 96px; height: 8px; margin-left: 7px; box-sizing: border-box; border: 1.5px solid #666; border-top: 0; }
    .keys { position: absolute; right: 0; bottom: 3px; height: 18px; width: 183px; box-sizing: border-box; padding-right: 7px; background: rgba(245,246,251,.7); display: flex; align-items: center; justify-content: flex-end; font-size: 15px; color: #000; white-space: nowrap; }
  `;

  render() {
    return html`
      <div class="bar">
        <svg class="panel" viewBox="0 0 34 28">
          <rect x="1.500" y="1.500" width="31" height="25" rx="1.500" fill="none" stroke="#fff" stroke-width="2.600"></rect>
          <path d="M1 1H11V27H1Z" fill="#fff"></path>
          <path d="M0 11.500H4V8.500L9 14L4 19.500V16.500H0Z" fill="#516878"></path>
        </svg>
        <div class="info">
          <div class="titlerow">
            <span class="title">LABMILANES</span>
            <svg width="23" height="22" viewBox="0 0 24 23"><path d="M12 0L15 8.300 24 8.500 17 14 19.500 22.500 12 17.500 4.500 22.500 7 14 0 8.500 9 8.300Z" fill="#7d8f9b"></path></svg>
          </div>
          <div class="sub">
            <svg viewBox="0 0 18 18"><circle cx="9" cy="9" r="9" fill="#5b84f3"></circle><path d="M7 7.300H10.500V12.500H12V14.200H6.500V12.500H7.800V9H7ZM7.700 3.500H10.400V6H7.700Z" fill="#fff"></path></svg>
            <span>Este mapa se ha hecho con Google My Maps.</span><span class="link">Crear tu mapa</span>
          </div>
        </div>
        <svg class="share" viewBox="0 0 25 24"><path d="M20 4L5 12L20 20" fill="none" stroke="#fff" stroke-width="2"></path><circle cx="20" cy="4" r="4" fill="#fff"></circle><circle cx="4.500" cy="12" r="4" fill="#fff"></circle><circle cx="20" cy="20" r="4" fill="#fff"></circle></svg>
        <svg class="full" viewBox="0 0 29 24"><path d="M1.500 8V1.500H8M21 1.500H27.500V8M27.500 16V22.500H21M8 22.500H1.500V16" fill="none" stroke="#fff" stroke-width="3"></path></svg>
      </div>
      <svg class="canvas" viewBox="1265 335 1266 583" preserveAspectRatio="none">
        <defs>
          <clipPath id="am"><polygon points=${AMERICA}></polygon></clipPath>
          <clipPath id="si"><polygon points=${SIBERIA}></polygon></clipPath>
          <clipPath id="eu"><polygon points=${EURASIA}></polygon></clipPath>
        </defs>
        <g transform="translate(1260 240) scale(.3954 .33333)">${shapes(ARCTIC)}</g>
        <g transform="translate(1260 560) scale(.4209 .33333)">
          ${shapes(RUSSIA_EAST)}
          <g clip-path="url(#si)" opacity=".7">${relief(77, 90, 12, -60, 330, 240, [MID, TUNDRA, "#ccdcd0"])}</g>
          ${shapes(NORTH_AMERICA)}
          <g clip-path="url(#am)" opacity=".7">
            ${relief(11, 150, 425, -40, 860, 250, [MID, WOOD, TUNDRA, LAND])}
            ${relief(23, 80, 850, 210, 1130, 400, [MID, LAND, WOOD])}
            ${relief(37, 55, 1160, 560, 1420, 830, [MID, LAND, WOOD])}
            ${relief(41, 50, 1320, 340, 1530, 510, [MID, TUNDRA, LAND])}
            ${relief(53, 24, 1040, 970, 1250, 1060, [MID, WOOD, LAND])}
          </g>
        </g>
        <g transform="translate(1900 560) scale(.4024 .33333)">
          ${shapes(OLD_WORLD)}
          <g clip-path="url(#eu)" opacity=".65">
            ${relief(61, 70, 790, -40, 1010, 140, [MID, WOOD, LAND])}
            ${relief(67, 60, 860, 290, 1090, 440, [MID, WOOD, LAND])}
            ${relief(71, 120, 1290, 100, 1560, 420, [MID, LAND, WOOD, TUNDRA])}
            ${relief(73, 16, 1400, -100, 1550, 90, [MID, WOOD])}
            ${relief(83, 36, 1290, 640, 1420, 780, [DRY, MID, LAND])}
          </g>
        </g>
        <g transform="translate(1860 240) scale(.4279 .33333)">${shapes(GREENLAND)}${shapes(NORTH_SEA_ISLES)}</g>
        ${[1378.5, 1762.5, 2146.5, 2530.5].map((x) => svg`<path d="M${x} 335V918" stroke="#fff" stroke-opacity=".22"></path>`)}
        ${LABELS.map(([t, x, y, w]) => svg`<text class="place" x=${x} y=${y} text-anchor="middle" textLength=${w} lengthAdjust="spacingAndGlyphs">${t}</text>`)}
        <text class="brand" x="1816" y="882.500" font-weight="700" textLength="77" lengthAdjust="spacingAndGlyphs"><tspan fill="#4f83ee">G</tspan><tspan fill="#e0483e">o</tspan><tspan fill="#f0b92d">o</tspan><tspan fill="#4f83ee">g</tspan><tspan fill="#41a65a">l</tspan><tspan fill="#e0483e">e</tspan></text>
        <text class="brand" x="1898" y="882.500" fill="#6b7280" textLength="84" lengthAdjust="spacingAndGlyphs">My Maps</text>
        ${pin(1834, 884)}${pin(1837, 896)}${pin(1824, 884)}
        <path d="M1818 918L1821 916H1829V918Z" fill="#1d3f6b"></path>
      </svg>
      <svg class="zoom" viewBox="0 0 44 88"><path d="M0 44.500H44" stroke="#ddd"></path><path d="M22 13.500V30M13.500 21.800H30.500M13.500 66.500H30.500" stroke="#959595" stroke-width="5"></path></svg>
      <div class="legal"><span>Datos de mapas ©2022</span><span class="terms">Términos</span><span class="km">1.000 km</span><span class="scale"></span></div>
      <div class="keys">Combinaciones de teclas</div>
    `;
  }
}

@customElement("app-root")
class AppRoot extends LitElement {
  static styles = css`
    :host { display: block; position: relative; height: 1413px; overflow: hidden; background: #fff; font-family: "Liberation Serif", "Times New Roman", serif; font-size: 24px; line-height: 36px; color: #808080; }
    .intro { position: relative; height: 246px; display: flex; align-items: flex-start; padding-left: 455px; box-sizing: border-box; }
    .photo { width: 1065px; height: 29px; background: #d0cfd3; }
    .more { margin: 31px 0 0 75px; width: 372px; height: 57px; box-sizing: border-box; border: 1px solid #4db5d3; border-radius: 29px; color: #4db5d3; display: flex; align-items: center; justify-content: center; }
    .swirl { position: absolute; left: 0; top: 0; width: 2531px; height: 130px; }
    header { position: absolute; top: 0; left: 0; right: 0; height: 94px; box-sizing: border-box; padding: 0 433px 3px 432px; background: #f8fafc; opacity: .8; display: flex; align-items: center; }
    .logo { width: 240px; height: 44px; margin-top: 8px; }
    nav { margin-left: auto; display: flex; align-items: center; gap: 48px; }
    nav svg { display: block; width: 27px; height: 24px; fill: #4db5d3; }
    .call { margin-left: 25px; margin-top: 2px; width: 240px; height: 57px; box-sizing: border-box; padding: 0 2px 2px 0; border-radius: 29px; background: #4db5d3; color: #fff; display: flex; align-items: center; justify-content: center; gap: 6px; }
    .call svg { width: 24px; height: 24px; fill: #fff; }
    .coverage { display: grid; grid-template-columns: 1265px 1266px; height: 672px; }
    .copy { background: linear-gradient(90deg, #00030c 0, #213592 100%); padding: 72px 0 0 763px; box-sizing: border-box; display: flex; flex-direction: column; align-items: flex-start; }
    h2 { margin: 0; font-weight: 400; font-size: 42px; line-height: 50px; color: #4db5d3; width: 380px; }
    .facts { margin-top: 67px; font-size: 30px; line-height: 48px; color: #fff; }
    .contact { margin-top: 42px; width: 265px; height: 57px; box-sizing: border-box; padding-bottom: 1px; border: 1px solid #4db5d3; border-radius: 29px; color: #4db5d3; display: flex; align-items: center; justify-content: center; }
    .badge { position: absolute; left: 0; top: 238px; width: 57px; height: 315px; background: #f5f5f5; display: flex; flex-direction: column; }
    .word { flex: 1; display: flex; }
    .stripe { width: 2px; background: linear-gradient(#fbdc20 0 165px, #2a6fb9 165px 232px, #e91c2b 232px); }
    .word svg { width: 55px; height: 300px; }
    .flag { height: 15px; background: linear-gradient(90deg, #fbdc20 0 30px, #2a6fb9 30px 43.500px, #e91c2b 43.500px); }
    footer { padding: 0 433px 0 432.500px; }
    .top { height: 297px; box-sizing: border-box; display: flex; align-items: flex-start; padding-top: 68px; border-bottom: 1px solid #ccc; }
    .foot-logo { width: 212px; height: 160px; }
    .links { margin-top: 4px; display: flex; flex-direction: column; }
    .one { margin-left: 249.500px; width: 393.500px; }
    .phone { margin-left: auto; display: flex; gap: 24px; padding-right: 22.500px; font-size: 48px; line-height: 71.500px; margin-top: 8px; }
    .ring { width: 96px; height: 96px; box-sizing: border-box; border: 1px solid #4db5d3; border-radius: 50%; display: flex; align-items: flex-start; justify-content: center; padding: 18px 0 0 2px; margin-top: 24px; }
    .ring svg { width: 48px; height: 48px; fill: #4db5d3; }
    .num { color: #4db5d3; }
    .bottom { display: flex; align-items: flex-start; justify-content: space-between; padding: 73px 24.500px 0 0; color: #5c5c5c; }
    .social { display: flex; gap: 47.500px; fill: #4db5d3; }
  `;

  render() {
    return html`
      <section class="intro">
        <div class="photo"></div>
        <div class="more">Más acerca de nosotros</div>
        <svg class="swirl" viewBox="0 0 2531 130">
          <path d="M2300 -14C2370 10 2410 62 2468 94H2502C2440 66 2400 20 2340 -10Z" fill="#eef0f3" fill-opacity=".6"></path>
          <path d="M2466 93C2492 106 2515 117 2531 123V106C2518 102 2508 98 2498 93Z" fill="#eff8fb"></path>
          <text x="1679" y="-3" font-size="24" fill="#808080">g</text>
        </svg>
      </section>

      <section class="coverage">
        <div class="copy">
          <h2>Aumentamos nuestra cobertura nacional</h2>
          <div class="facts"><div>1 Centro de Fresado</div><div>14 Agencias comerciales</div></div>
          <div class="contact">Contáctanos</div>
        </div>
        <lab-map></lab-map>
      </section>

      <footer>
        <div class="top">
          <svg class="foot-logo" viewBox="432 986 212 160">
            <g transform="translate(535 989.800)">${mark("mf")}</g>
            <g font-family="Lato, sans-serif" fill="#2c3790" stroke="#2c3790">
              <text x="429" y="1073.500" font-size="56" font-weight="900" stroke-width=".6" textLength="104.500" lengthAdjust="spacingAndGlyphs">Luis</text>
              <text x="429" y="1123.700" font-size="56" font-weight="900" stroke-width=".6" textLength="212" lengthAdjust="spacingAndGlyphs">Milanés</text>
              <text x="433" y="1141.700" font-size="14.500" font-weight="700" fill="#4db5d3" stroke="none" textLength="208">LABORATORIO DENTAL</text>
              <circle cx="628.200" cy="1039.700" r="5.500" fill="none" stroke-width="1.100"></circle>
              <text x="628.300" y="1043" font-size="9" font-weight="700" stroke="none" text-anchor="middle">R</text>
            </g>
          </svg>
          <div class="links one"><span>Materiales y Prótesis</span><span>Pedidos</span><span>Pagos</span></div>
          <div class="links"><span>Nosotros</span><span>Contacto</span></div>
          <div class="phone">
            <div class="ring"><svg viewBox="0 0 512 512"><path d=${PHONE}></path></svg></div>
            <div><div>Llámanos</div><div class="num">4860740</div></div>
          </div>
        </div>
        <div class="bottom">
          <span>Laboratorio dental Luis Milanés S.A.S © 2020 | Políticas de Garantía - Política de Privacidad de Datos</span>
          <div class="social">
            <svg width="30" height="48" viewBox="0 0 320 512"><path d=${FACEBOOK}></path></svg>
            <svg width="42" height="48" viewBox="0 0 448 512"><path d=${LINKEDIN}></path></svg>
            <svg width="42" height="48" viewBox="0 0 42 48"><rect x="2" y="5" width="38" height="38" rx="10" fill="none" stroke="#4db5d3" stroke-width="3.800"></rect><circle cx="21" cy="24" r="9" fill="none" stroke="#4db5d3" stroke-width="3.800"></circle><circle cx="32.200" cy="12.800" r="2.600"></circle></svg>
          </div>
        </div>
      </footer>

      <header>
        <svg class="logo" viewBox="432 28 240 44">
          <g transform="translate(433 29) scale(.456 .447)">${mark("mh")}</g>
          <g font-family="Lato, sans-serif" fill="#2c3790">
            <text x="484.500" y="57.800" font-size="32" font-weight="900" stroke="#2c3790" stroke-width=".3" textLength="184" lengthAdjust="spacingAndGlyphs">Luis Milanés</text>
            <text x="485.500" y="69" font-size="8.800" font-weight="700" fill="#4db5d3" textLength="118">LABORATORIO DENTAL</text>
            <circle cx="475.700" cy="51.500" r="2.300" fill="none" stroke="#2c3790" stroke-width=".6"></circle>
            <text x="475.700" y="52.900" font-size="4" font-weight="700" text-anchor="middle">R</text>
          </g>
        </svg>
        <nav>
          <svg viewBox="0 0 576 512"><path d=${HOME}></path></svg>
          <span>Materiales y Prótesis</span><span>Pedidos</span><span>Nosotros</span><span>Blog</span><span>Contacto</span>
        </nav>
        <div class="call"><svg viewBox="0 0 512 512"><path d=${PHONE}></path></svg><span>486 0740</span></div>
      </header>

      <aside class="badge">
        <div class="word">
          <div class="stripe"></div>
          <svg viewBox="2 238 55 300"><text transform="translate(33 514) rotate(-90)" font-family="Open Sans, Noto Sans, sans-serif" font-size="20.500" font-weight="600" fill="#828486" textLength="241" lengthAdjust="spacingAndGlyphs">Empresa 100% Colombiana</text></svg>
        </div>
        <div class="flag"></div>
      </aside>
    `;
  }
}
